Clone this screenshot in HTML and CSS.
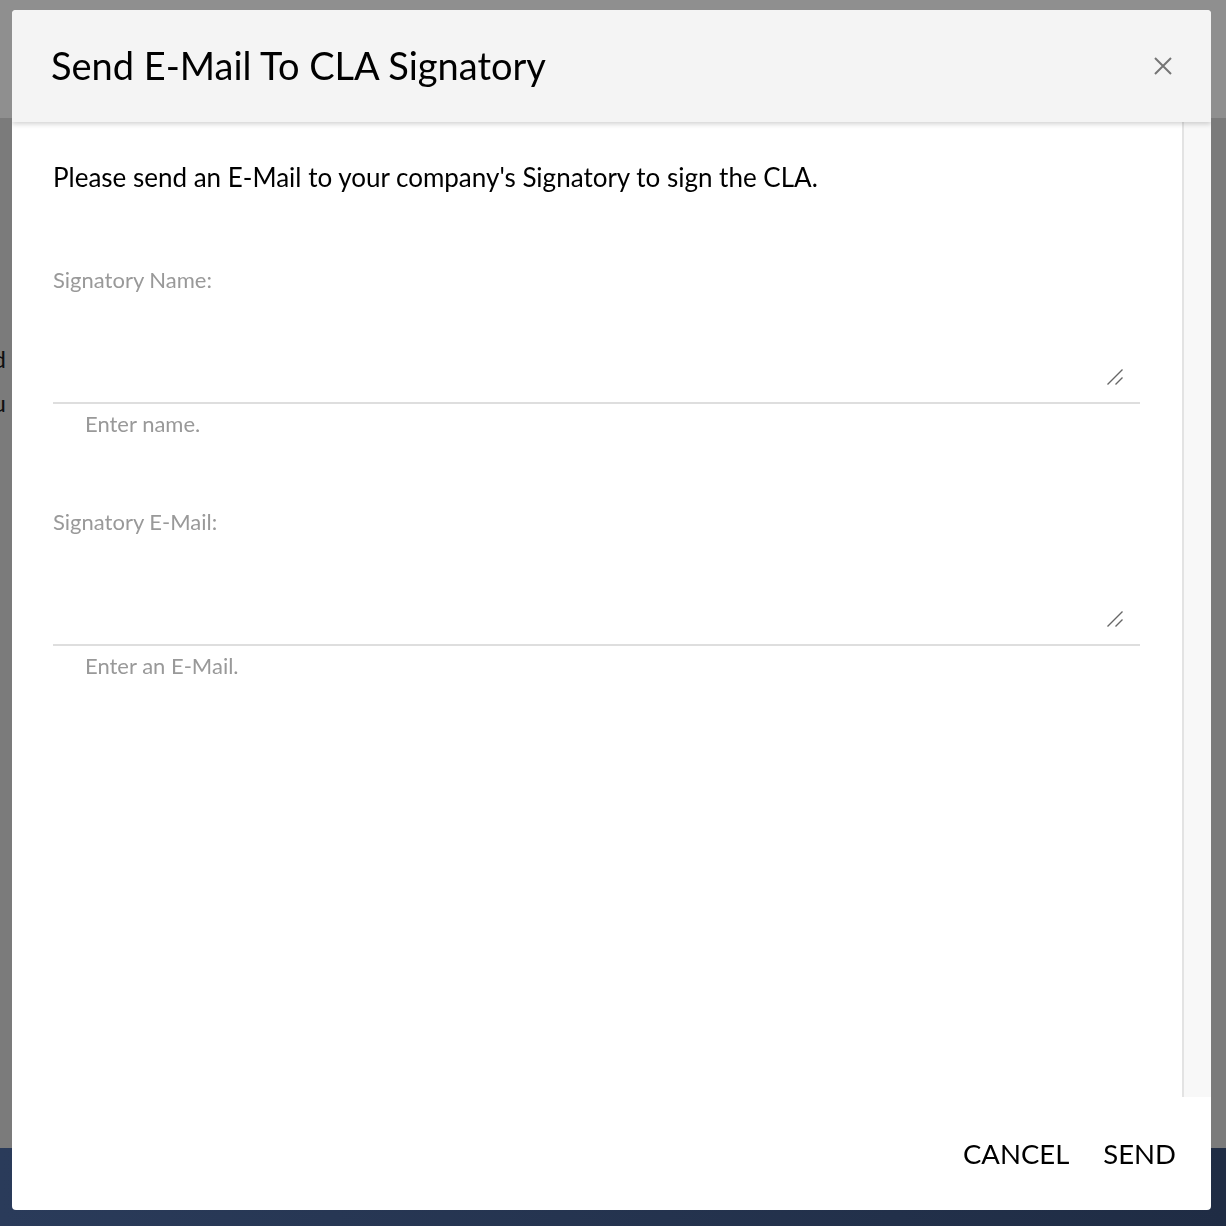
FILE: index.html
```html
<!DOCTYPE html>
<html lang="en">
<head>
<meta charset="utf-8">
<title>Send E-Mail To CLA Signatory</title>
<link rel="stylesheet" href="styles.css">
</head>
<body>
<div class="page">
  <header class="page-header"></header>
  <main class="page-main">
    <div class="under-col">
      <p class="under-line">Please review the agreement before it can be signed</p>
      <p class="under-line">If you are contributing on behalf of a company, ask you</p>
    </div>
  </main>
  <footer class="page-footer"></footer>
</div>

<div class="dialog" role="dialog" aria-labelledby="dlg-title">
  <div class="dialog-header">
    <h1 id="dlg-title" class="dialog-title">Send E-Mail To CLA Signatory</h1>
    <button class="close-btn" aria-label="Close">
      <svg width="18" height="18" viewBox="0 0 18 18"><path d="M1 1 L17 17 M17 1 L1 17" stroke="#757575" stroke-width="2" fill="none"/></svg>
    </button>
  </div>
  <div class="dialog-body">
    <div class="dialog-content">
      <p class="intro">Please send an E-Mail to your company's Signatory to sign the CLA.</p>
      <div class="field">
        <label class="field-label" for="sig-name">Signatory Name:</label>
        <div class="field-box">
          <textarea id="sig-name" class="field-input"></textarea>
          <svg class="grip" width="16" height="16" viewBox="0 0 16 16"><path d="M0.5 15.5 L15.5 0.5 M8.5 15.5 L15.5 8.5" stroke="#666" stroke-width="1.4" fill="none"/></svg>
        </div>
        <div class="field-hint">Enter name.</div>
      </div>
      <div class="field">
        <label class="field-label" for="sig-mail">Signatory E-Mail:</label>
        <div class="field-box">
          <textarea id="sig-mail" class="field-input"></textarea>
          <svg class="grip" width="16" height="16" viewBox="0 0 16 16"><path d="M0.5 15.5 L15.5 0.5 M8.5 15.5 L15.5 8.5" stroke="#666" stroke-width="1.4" fill="none"/></svg>
        </div>
        <div class="field-hint">Enter an E-Mail.</div>
      </div>
    </div>
    <div class="scroll-track"></div>
  </div>
  <div class="dialog-footer">
    <button class="action-btn">CANCEL</button>
    <button class="action-btn">SEND</button>
  </div>
</div>
</body>
</html>
```

FILE: styles.css
```css
html, body {
  margin: 0;
  padding: 0;
}
body {
  font-family: "Lato", "Liberation Sans", sans-serif;
  width: 1226px;
  height: 1226px;
  overflow: hidden;
}
.page {
  display: flex;
  flex-direction: column;
  height: 1226px;
}
.page-header {
  height: 118px;
  background: #8f8f8f;
}
.page-main {
  flex: 1;
  background: #7b7b7b;
  padding-top: 228px;
  display: flex;
  align-items: flex-start;
}
.under-col {
  width: 6px;
  display: flex;
  flex-direction: column;
  align-items: flex-end;
  gap: 18px;
}
.under-line {
  margin: 0;
  font-size: 24px;
  line-height: 26px;
  color: #111;
  white-space: nowrap;
}
.page-footer {
  height: 78px;
  background: linear-gradient(90deg, #2a3b5a 0%, #1f2c44 100%);
}

.dialog {
  position: fixed;
  left: 12px;
  top: 10px;
  width: 1199px;
  height: 1200px;
  background: #fff;
  border-radius: 4px;
  display: flex;
  flex-direction: column;
  overflow: hidden;
}
.dialog-header {
  height: 112px;
  box-sizing: border-box;
  flex: none;
  background: #f4f4f4;
  box-shadow: 0 2px 5px rgba(0, 0, 0, 0.18);
  display: flex;
  align-items: center;
  justify-content: space-between;
  padding: 0 39px 3px 39px;
  position: relative;
  z-index: 1;
}
.dialog-title {
  margin: 0;
  font-weight: 400;
  font-size: 38px;
  color: #000;
}
.close-btn {
  border: 0;
  background: none;
  padding: 0;
  width: 18px;
  height: 18px;
  display: flex;
  margin-top: 3px;
}
.dialog-body {
  flex: 1;
  display: flex;
  min-height: 0;
}
.dialog-content {
  flex: 1;
  padding: 40px 42px 0 41px;
}
.scroll-track {
  width: 27px;
  background: #f8f8f8;
  border-left: 2px solid #e3e3e3;
}
.intro {
  margin: 0;
  font-size: 26px;
  line-height: 30px;
  color: #000;
}
.field {
  margin-top: 76px;
}
.field + .field {
  margin-top: 74px;
}
.field-label {
  display: block;
  font-size: 22px;
  line-height: 24px;
  color: #999;
}
.field-box {
  position: relative;
  margin-top: 29px;
  border-bottom: 2px solid #dedede;
  padding: 0 15px 15px 0;
}
.field-input {
  display: block;
  width: 100%;
  height: 66px;
  box-sizing: border-box;
  border: 0;
  outline: none;
  resize: none;
  font: inherit;
  padding: 0;
  background: transparent;
}
.grip {
  position: absolute;
  right: 17px;
  bottom: 17px;
}
.field-hint {
  margin-top: 8px;
  padding-left: 32px;
  font-size: 22px;
  line-height: 24px;
  color: #999;
}
.dialog-footer {
  height: 113px;
  flex: none;
  display: flex;
  justify-content: flex-end;
  align-items: center;
  gap: 34px;
  padding-right: 35px;
}
.action-btn {
  border: 0;
  background: none;
  padding: 0;
  font-family: inherit;
  font-size: 27.5px;
  color: #000;
  cursor: pointer;
}
```
